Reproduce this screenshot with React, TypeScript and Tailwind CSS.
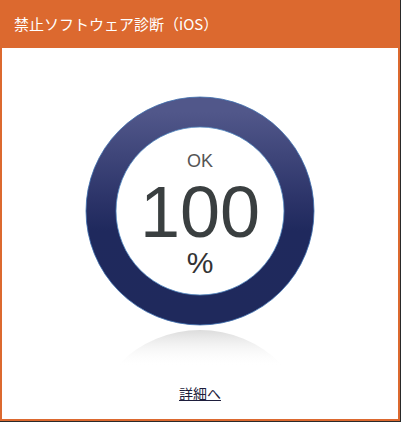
import React from "react";

const jp = { fontFamily: '"Noto Sans CJK JP", "Liberation Sans", sans-serif' };
const latin = { fontFamily: '"Liberation Sans", Arial, sans-serif' };

function Gauge({ value, label }: { value: number; label: string }) {
  return (
    <div className="relative w-[232px] h-[270px]">
      <svg width="232" height="270" viewBox="0 0 232 270" className="absolute inset-0">
        <defs>
          <linearGradient id="ring" x1="0" y1="0" x2="0" y2="1">
            <stop offset="0" stopColor="#51578a" />
            <stop offset="0.45" stopColor="#2b3368" />
            <stop offset="0.6" stopColor="#1f295d" />
            <stop offset="1" stopColor="#1f295c" />
          </linearGradient>
          <linearGradient id="mirror" x1="0" y1="233" x2="0" y2="272" gradientUnits="userSpaceOnUse">
            <stop offset="0" stopColor="#d8d8d8" />
            <stop offset="1" stopColor="#ffffff" stopOpacity="0" />
          </linearGradient>
        </defs>
        <circle cx="116" cy="116" r="99" fill="none" stroke="url(#ring)" strokeWidth="30" />
        <circle cx="116" cy="116" r="114" fill="none" stroke="#3d6fae" strokeWidth="0.8" />
        <circle cx="116" cy="116" r="84" fill="none" stroke="#4f86c0" strokeWidth="0.8" />
        <circle cx="116" cy="349" r="114" fill="url(#mirror)" />
      </svg>
      <div className="relative flex flex-col items-center pt-[57px]" style={latin}>
        <span className="text-[18px] leading-none text-[#555]">{label}</span>
        <span className="mt-[6px] text-[72px] leading-none text-[#3a3f40]">{value}</span>
        <span className="mt-0 text-[30px] leading-none text-[#333]">%</span>
      </div>
    </div>
  );
}

export default function App() {
  return (
    <div className="w-[401px] h-[422px] bg-[#2a2a2a] pr-px pb-px">
      <div className="w-full h-full flex flex-col bg-white border-2 border-t-0 border-[#dc692f]">
        <div className="h-[48px] bg-[#dc692f] flex items-center -mx-[2px] pl-[14px]">
          <span className="text-white text-[15px]" style={jp}>
            禁止ソフトウェア診断（iOS）
          </span>
        </div>
        <div className="flex-1 flex flex-col items-center">
          <div className="mt-[47px]">
            <Gauge value={100} label="OK" />
          </div>
          <a href="#" className="mt-[18px] text-[14px] leading-[20px] text-[#1e1e3c] underline" style={jp}>
            詳細へ
          </a>
        </div>
      </div>
    </div>
  );
}
